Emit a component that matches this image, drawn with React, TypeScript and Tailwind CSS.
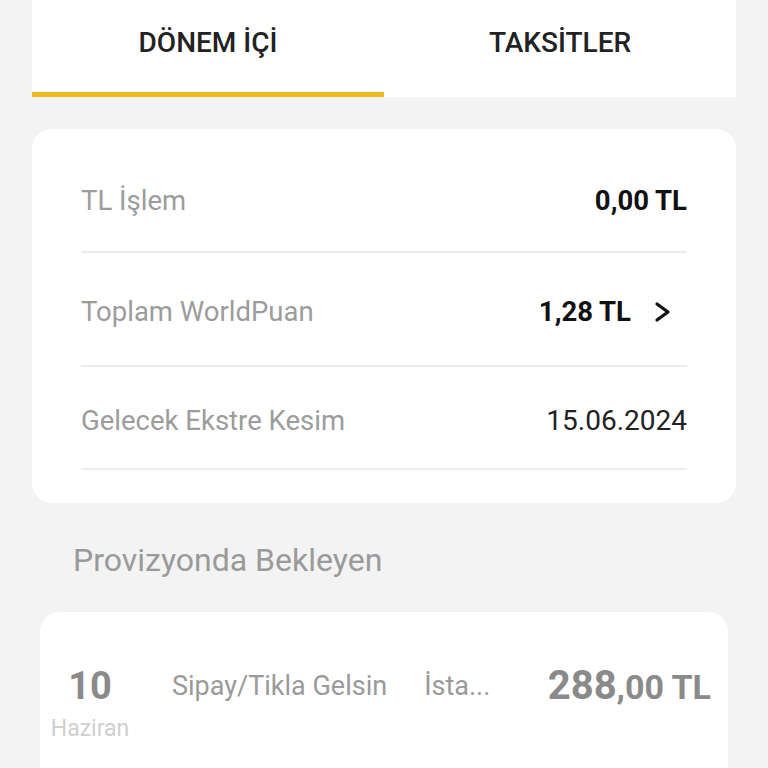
const rows = [
  { label: "TL İşlem", value: "0,00 TL", bold: true, h: "h-[108px]" },
  { label: "Toplam WorldPuan", value: "1,28 TL", bold: true, chevron: true, h: "h-[114px]" },
  { label: "Gelecek Ekstre Kesim", value: "15.06.2024", bold: false, h: "h-[103px]" },
];

export default function App() {
  return (
    <div className="min-h-screen w-[768px] h-[768px] overflow-hidden bg-[#f3f3f3] px-8 font-['Roboto',sans-serif]">
      {/* Tabs */}
      <div className="flex h-[97px] bg-white">
        <div className="flex flex-1 flex-col">
          <div className="flex flex-1 items-center justify-center pb-[6px] text-[28px] font-medium text-[#222]">
            DÖNEM İÇİ
          </div>
          <div className="h-[5px] bg-[#f0b91c]"></div>
        </div>
        <div className="flex flex-1 flex-col">
          <div className="flex flex-1 items-center justify-center pb-[6px] text-[28px] font-medium text-[#222]">
            TAKSİTLER
          </div>
          <div className="h-[5px]"></div>
        </div>
      </div>

      {/* Summary card */}
      <div className="mt-8 rounded-[20px] bg-white px-[49px] pt-4 pb-[33px]">
        {rows.map((r) => (
          <div
            key={r.label}
            className={`flex items-center justify-between border-b-2 border-[#ececec] pt-[6px] ${r.h}`}
          >
            <span className="text-[27.5px] text-[#9c9c9c]">{r.label}</span>
            <div className="flex items-center">
              <span
                className={
                  r.bold
                    ? "text-[27.5px] font-bold text-[#111]"
                    : "text-[28px] text-[#222]"
                }
              >
                {r.value}
              </span>
              {r.chevron && (
                <svg className="ml-[23px] mr-[15px]" width="18" height="22" viewBox="0 0 18 22" fill="none">
                  <polyline
                    points="3,3 14,11 3,19"
                    stroke="#111"
                    strokeWidth="3.2"
                    strokeLinecap="round"
                    strokeLinejoin="round"
                  />
                </svg>
              )}
            </div>
          </div>
        ))}
      </div>

      {/* Pending */}
      <div className="mt-[33px] ml-[41px] text-[32px] text-[#9a9a9a]">Provizyonda Bekleyen</div>

      <div className="mx-2 mt-[28px] h-[200px] rounded-[20px] bg-white pt-[50px] pr-[17px] pl-[10px]">
        <div className="flex items-start">
          <div className="flex w-[80px] flex-col items-center">
            <span className="text-[38px] leading-[48px] font-bold text-[#8a8a8a]">10</span>
            <span className="mt-[4px] text-[23px] leading-[30px] text-[#cfcfcf]">Haziran</span>
          </div>
          <span className="ml-[42px] text-[27px] leading-[48px] text-[#9a9a9a]">Sipay/Tikla Gelsin</span>
          <span className="ml-[37px] text-[27px] leading-[48px] text-[#9a9a9a]">İsta...</span>
          <span className="ml-auto leading-[48px] font-bold text-[#8a8a8a]">
            <span className="text-[40px]">288</span>
            <span className="text-[34px]">,00 TL</span>
          </span>
        </div>
      </div>
    </div>
  );
}
